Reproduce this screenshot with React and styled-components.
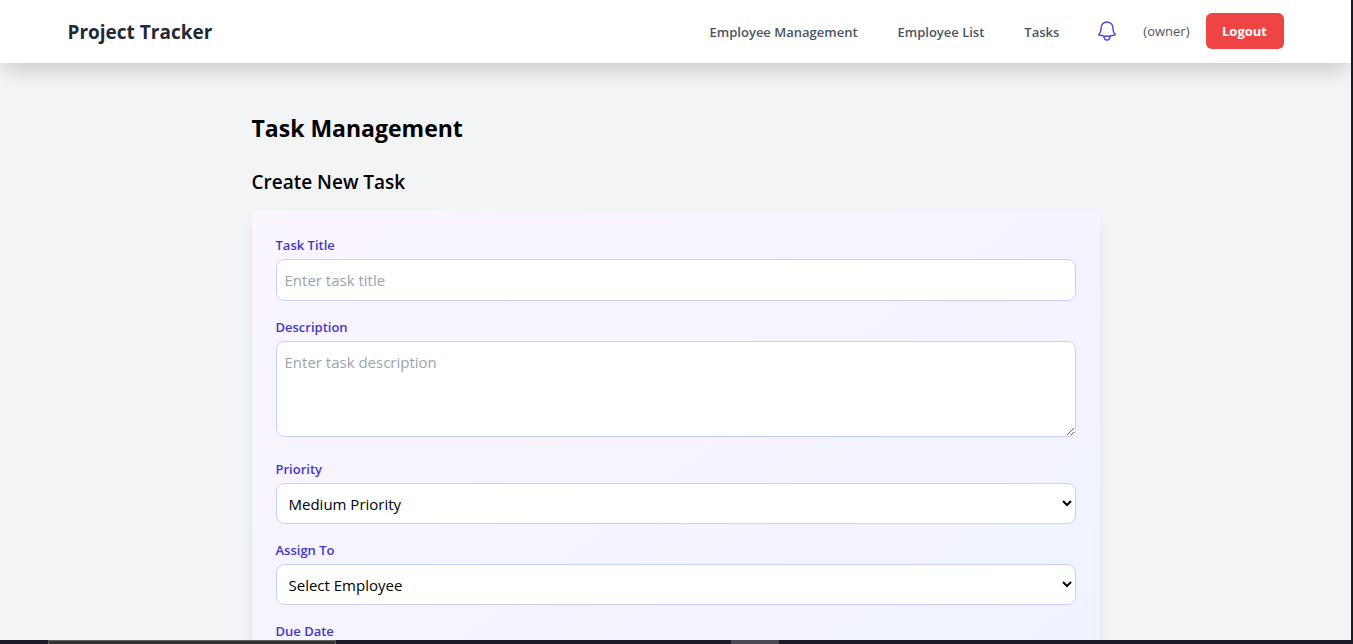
import React from "react";
import styled, { createGlobalStyle } from "styled-components";

const GlobalStyle = createGlobalStyle`
  *, *::before, *::after { box-sizing: border-box; }
  body {
    margin: 0;
    font-family: "Open Sans", "Noto Sans", sans-serif;
    font-size: 15px;
    line-height: 24px;
    color: #000;
  }
  h1, h2, p { margin: 0; }
`;

const Screen = styled.div`
  display: flex;
  flex-direction: column;
  height: 100vh;
  background: #1b1a26;
`;

const Page = styled.div`
  flex: 1;
  min-height: 0;
  margin-right: 2px;
  overflow: hidden;
  background: #f3f4f6;
`;

const Header = styled.header`
  position: relative;
  background: #fff;
  box-shadow: 0 10px 20px -3px rgba(0, 0, 0, 0.17);
`;

const HeaderInner = styled.div`
  display: flex;
  align-items: center;
  justify-content: space-between;
  max-width: 1280px;
  margin: 0 auto;
  padding: 13px 32px 14px;
`;

const Brand = styled.a`
  padding-top: 2px;
  font-size: 19px;
  line-height: 28px;
  font-weight: 700;
  color: #1f2937;
  text-decoration: none;
`;

const Nav = styled.nav`
  display: flex;
  align-items: center;
  gap: 36px;
`;

const NavLinks = styled.div`
  display: flex;
  gap: 40px;
  padding-top: 2px;
`;

const NavLink = styled.a`
  font-size: 13px;
  line-height: 20px;
  font-weight: 600;
  color: #4b5563;
  text-decoration: none;
`;

const Account = styled.div`
  display: flex;
  align-items: center;
  gap: 16px;
`;

const BellButton = styled.button`
  display: flex;
  margin-right: 8px;
  padding: 0;
  border: 0;
  background: none;
  color: #4f46e5;
`;

const Role = styled.span`
  font-size: 13px;
  line-height: 20px;
  color: #4b5563;
`;

const LogoutButton = styled.button`
  min-width: 78px;
  padding: 8px 16px;
  border: 0;
  border-radius: 6px;
  background: #ef4444;
  color: #fff;
  font-family: inherit;
  font-size: 13px;
  line-height: 20px;
  font-weight: 700;
`;

const Main = styled.main`
  max-width: 896px;
  margin: 0 auto;
  padding: 49px 24px 48px;
`;

const Title = styled.h1`
  margin-bottom: 24px;
  font-size: 23px;
  line-height: 32px;
  font-weight: 700;
`;

const Subtitle = styled.h2`
  margin-bottom: 15px;
  font-size: 19px;
  line-height: 28px;
  font-weight: 600;
`;

const Card = styled.form`
  display: flex;
  flex-direction: column;
  gap: 16px;
  padding: 24px 24px 160px;
  border-radius: 8px;
  background: linear-gradient(to bottom right, #faf5ff, #eef2ff);
  box-shadow: 0 10px 15px -3px rgba(0, 0, 0, 0.1), 0 4px 6px -4px rgba(0, 0, 0, 0.1);
`;

const Field = styled.div`
  display: flex;
  flex-direction: column;
  gap: 4px;
`;

const Label = styled.label`
  font-size: 13px;
  line-height: 20px;
  font-weight: 600;
  color: #4338ca;
`;

const Input = styled.input`
  width: 100%;
  height: 42px;
  padding: 8px;
  border: 1px solid #c7d2fe;
  border-radius: 8px;
  background: #fff;
  color: #000;
  font: inherit;
  &::placeholder { color: #9ca3af; opacity: 1; }
`;

const TextArea = styled(Input)`
  display: block;
  height: 96px;
  margin-bottom: 6px;
  resize: vertical;
`;

const Select = styled.select`
  width: 100%;
  height: 41px;
  padding: 8px;
  border: 1px solid #c7d2fe;
  border-radius: 8px;
  background: #fff;
  color: #000;
  font: inherit;
`;

const Taskbar = styled.div`
  display: flex;
  height: 4px;
  background: #1b1a26;
`;

const TaskbarItem = styled.div`
  width: ${(p) => p.$width};
  margin-left: ${(p) => p.$offset};
  background: ${(p) => p.$color};
  border: ${(p) => (p.$outlined ? "1px solid #5c5c5c" : "0")};
  border-bottom: 0;
`;

const BellIcon = () => (
  <svg width="24" height="24" viewBox="0 0 24 24" fill="none" stroke="currentColor" strokeWidth="1.5" strokeLinecap="round" strokeLinejoin="round" aria-hidden="true">
    <path d="M14.857 17.082a23.848 23.848 0 0 0 5.454-1.31A8.967 8.967 0 0 1 18 9.75V9A6 6 0 0 0 6 9v.75a8.967 8.967 0 0 1-2.312 6.022c1.733.64 3.56 1.085 5.455 1.31m5.714 0a24.255 24.255 0 0 1-5.714 0m5.714 0a3 3 0 1 1-5.714 0" />
  </svg>
);

export default function App() {
  return (
    <>
      <GlobalStyle />
      <Screen>
        <Page>
          <Header>
            <HeaderInner>
              <Brand href="#">Project Tracker</Brand>
              <Nav>
                <NavLinks>
                  <NavLink href="#employees">Employee Management</NavLink>
                  <NavLink href="#list">Employee List</NavLink>
                  <NavLink href="#tasks">Tasks</NavLink>
                </NavLinks>
                <Account>
                  <BellButton type="button" aria-label="Notifications"><BellIcon /></BellButton>
                  <Role>(owner)</Role>
                  <LogoutButton type="button">Logout</LogoutButton>
                </Account>
              </Nav>
            </HeaderInner>
          </Header>
          <Main>
            <Title>Task Management</Title>
            <Subtitle>Create New Task</Subtitle>
            <Card>
              <Field>
                <Label htmlFor="title">Task Title</Label>
                <Input id="title" type="text" placeholder="Enter task title" />
              </Field>
              <Field>
                <Label htmlFor="description">Description</Label>
                <TextArea as="textarea" id="description" placeholder="Enter task description" />
              </Field>
              <Field>
                <Label htmlFor="priority">Priority</Label>
                <Select id="priority" defaultValue="medium">
                  <option value="low">Low Priority</option>
                  <option value="medium">Medium Priority</option>
                  <option value="high">High Priority</option>
                </Select>
              </Field>
              <Field>
                <Label htmlFor="assignee">Assign To</Label>
                <Select id="assignee" defaultValue="">
                  <option value="">Select Employee</option>
                </Select>
              </Field>
              <Field>
                <Label htmlFor="due">Due Date</Label>
                <Input id="due" type="date" />
              </Field>
            </Card>
          </Main>
        </Page>
        <Taskbar>
          <TaskbarItem $width="288px" $offset="48px" $color="#343232" $outlined />
          <TaskbarItem $width="48px" $offset="395px" $color="#4a4953" />
        </Taskbar>
      </Screen>
    </>
  );
}
